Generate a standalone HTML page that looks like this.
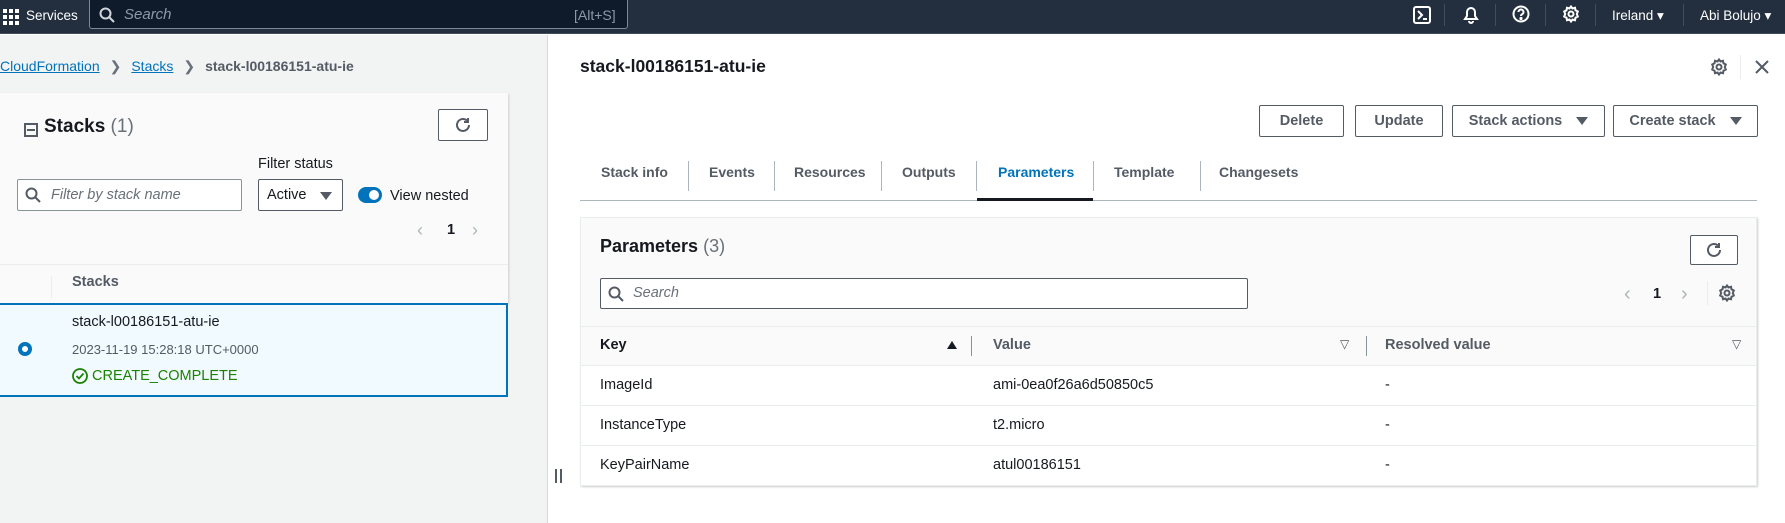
<!DOCTYPE html>
<html><head><meta charset="utf-8"><style>
*{box-sizing:border-box;margin:0;padding:0}
body{width:1785px;height:523px;overflow:hidden;font-family:"Liberation Sans",sans-serif;background:#fff;position:relative;color:#16191f;font-size:14.5px}
.a{position:absolute;white-space:nowrap}
.top{left:0;top:0;width:1785px;height:34px;background:#232f3e;border-bottom:1px solid #414d5c}
.btn{position:absolute;border:1px solid #545b64;border-radius:2px;background:#fff;color:#545b64;font-weight:bold;font-size:14.5px;display:flex;align-items:center;justify-content:center;gap:14px}
.tri{width:0;height:0;border-left:6px solid transparent;border-right:6px solid transparent;border-top:8px solid #545b64;display:inline-block}
.tab{position:absolute;top:164px;color:#545b64;font-weight:bold;font-size:14px}
.sep{position:absolute;width:1px;background:#aab7b8}
.hl{position:absolute;height:1px;background:#eaeded}
</style></head><body>
<div class="a top"></div>
<svg class="a" style="left:3px;top:9px" width="16" height="16" viewBox="0 0 16 16" fill="#fff"><rect x="0" y="0" width="4" height="4"/><rect x="6" y="0" width="4" height="4"/><rect x="12" y="0" width="4" height="4"/><rect x="0" y="6" width="4" height="4"/><rect x="6" y="6" width="4" height="4"/><rect x="12" y="6" width="4" height="4"/><rect x="0" y="12" width="4" height="4"/><rect x="6" y="12" width="4" height="4"/><rect x="12" y="12" width="4" height="4"/></svg>
<div class="a" style="left:26px;top:8px;color:#fff;font-size:13.5px">Services</div>
<div class="a" style="left:89px;top:0;width:539px;height:29px;background:#0f1b2a;border:1px solid #7d8998;border-top:none;border-radius:0 0 3px 3px"></div>
<svg class="a" style="left:99px;top:7px" width="16" height="16" viewBox="0 0 16 16" fill="none" stroke="#d1d5db" stroke-width="2"><circle cx="6.5" cy="6.5" r="5"/><path d="M10 10l5 5"/></svg>
<div class="a" style="left:124px;top:6px;color:#8d99a8;font-style:italic;font-size:15px">Search</div>
<div class="a" style="left:574px;top:7px;color:#8d99a8;font-size:14px">[Alt+S]</div>
<svg class="a" style="left:1413px;top:6px" width="18" height="18" viewBox="0 0 18 18" fill="none" stroke="#fff" stroke-width="2"><rect x="1" y="1" width="16" height="16" rx="2"/><path d="M5 5l4 4-4 4M10 13h4"/></svg>
<div class="sep" style="left:1444px;top:4px;height:22px;background:#414d5c"></div>
<svg class="a" style="left:1462px;top:5px" width="18" height="20" viewBox="0 0 18 20" fill="none" stroke="#fff" stroke-width="2"><path d="M3 14h12l-2-3V7a4 4 0 0 0-8 0v4z"/><path d="M7 16a2 2 0 0 0 4 0"/></svg>
<div class="sep" style="left:1495px;top:4px;height:22px;background:#414d5c"></div>
<svg class="a" style="left:1512px;top:5px" width="18" height="18" viewBox="0 0 18 18" fill="none" stroke="#fff" stroke-width="2"><circle cx="9" cy="9" r="7.5"/><path d="M6.5 7a2.5 2.5 0 1 1 3.5 2.3c-.7.4-1 .9-1 1.7" /><circle cx="9" cy="13.5" r=".6" fill="#fff"/></svg>
<div class="sep" style="left:1545px;top:4px;height:22px;background:#414d5c"></div>
<svg class="a" style="left:1562px;top:5px" width="18" height="18" viewBox="0 0 18 18" fill="none" stroke="#fff" stroke-width="2"><circle cx="9" cy="9" r="2.5"/><path d="M9 1.5l1.5 2 2.5-.7.5 2.5 2.3 1.2-1 2.5 1 2.5-2.3 1.2-.5 2.5-2.5-.7L9 16.5l-1.5-2-2.5.7-.5-2.5-2.3-1.2 1-2.5-1-2.5L4.5 5.3 5 2.8l2.5.7z"/></svg>
<div class="sep" style="left:1595px;top:4px;height:22px;background:#414d5c"></div>
<div class="a" style="left:1612px;top:8px;color:#fff;font-size:13.5px">Ireland ▾</div>
<div class="sep" style="left:1683px;top:4px;height:22px;background:#414d5c"></div>
<div class="a" style="left:1700px;top:8px;color:#fff;font-size:13.5px">Abi Bolujo ▾</div>

<!-- left panel -->
<div class="a" style="left:0;top:35px;width:548px;height:488px;background:#f2f3f3"></div>
<div class="a" style="left:547px;top:35px;width:1px;height:488px;background:#d5dbdb"></div>
<div class="a" style="left:0;top:58px;font-size:14px"><span style="color:#0073bb;text-decoration:underline">CloudFormation</span><span style="color:#687078;margin:0 10px">&#x276F;</span><span style="color:#0073bb;text-decoration:underline">Stacks</span><span style="color:#687078;margin:0 10px">&#x276F;</span><span style="color:#545b64;font-weight:bold">stack-l00186151-atu-ie</span></div>
<div class="a" style="left:0;top:93px;width:508px;height:210px;background:#fafafa;box-shadow:1px 1px 2px rgba(0,0,0,.15)"></div>
<div class="a" style="left:24px;top:123px;width:14px;height:14px;border:2px solid #545b64"></div>
<div class="a" style="left:27px;top:129px;width:8px;height:2px;background:#545b64"></div>
<div class="a" style="left:44px;top:116px;font-size:19px;font-weight:bold">Stacks <span style="font-weight:normal;color:#687078">(1)</span></div>
<div class="btn" style="left:438px;top:109px;width:50px;height:32px"><svg width="18" height="18" viewBox="0 0 18 18" fill="none" stroke="#545b64" stroke-width="2"><path d="M15 9a6 6 0 1 1-2-4.5"/><path d="M14 2v4h-4"/></svg></div>
<div class="a" style="left:258px;top:156px">Filter status</div>
<div class="a" style="left:17px;top:179px;width:225px;height:32px;background:#fff;border:1px solid #879596;border-radius:2px"></div>
<svg class="a" style="left:25px;top:187px" width="16" height="16" viewBox="0 0 16 16" fill="none" stroke="#545b64" stroke-width="2"><circle cx="6.5" cy="6.5" r="5"/><path d="M10 10l5 5"/></svg>
<div class="a" style="left:51px;top:187px;color:#687078;font-style:italic">Filter by stack name</div>
<div class="a" style="left:258px;top:179px;width:85px;height:32px;background:#fff;border:1px solid #545b64;border-radius:2px"></div>
<div class="a" style="left:267px;top:187px">Active</div>
<div class="a tri" style="left:320px;top:192px"></div>
<div class="a" style="left:358px;top:187px;width:24px;height:16px;border-radius:8px;background:#0073bb"></div>
<div class="a" style="left:369px;top:190px;width:10px;height:10px;border-radius:5px;background:#fff"></div>
<div class="a" style="left:390px;top:188px">View nested</div>
<div class="a" style="left:417px;top:220px;color:#aab7b8;font-size:18px">&#x2039;</div>
<div class="a" style="left:447px;top:222px;font-weight:bold">1</div>
<div class="a" style="left:472px;top:220px;color:#aab7b8;font-size:18px">&#x203A;</div>
<div class="hl" style="left:0;top:264px;width:508px"></div>
<div class="sep" style="left:51px;top:276px;height:22px;background:#eaeded"></div>
<div class="a" style="left:72px;top:274px;font-weight:bold;color:#545b64">Stacks</div>
<div class="a" style="left:0;top:303px;width:508px;height:94px;background:#f1faff;border:2px solid #0073bb;border-left:none"></div>
<div class="a" style="left:18px;top:342px;width:14px;height:14px;border-radius:7px;border:4px solid #0073bb;background:#fff"></div>
<div class="a" style="left:72px;top:314px">stack-l00186151-atu-ie</div>
<div class="a" style="left:72px;top:342px;font-size:13px;color:#545b64">2023-11-19 15:28:18 UTC+0000</div>
<svg class="a" style="left:72px;top:368px" width="16" height="16" viewBox="0 0 16 16" fill="none" stroke="#1d8102" stroke-width="1.8"><circle cx="8" cy="8" r="7"/><path d="M4.5 8l2.5 2.5 4.5-5"/></svg>
<div class="a" style="left:92px;top:368px;color:#1d8102">CREATE_COMPLETE</div>
<div class="a" style="left:555px;top:469px;width:2px;height:14px;background:#545b64"></div>
<div class="a" style="left:560px;top:469px;width:2px;height:14px;background:#545b64"></div>

<!-- right panel -->
<div class="a" style="left:580px;top:56px;font-size:17.5px;font-weight:bold">stack-l00186151-atu-ie</div>
<svg class="a" style="left:1710px;top:58px" width="18" height="18" viewBox="0 0 18 18" fill="none" stroke="#545b64" stroke-width="2"><circle cx="9" cy="9" r="2.5"/><path d="M9 1.5l1.5 2 2.5-.7.5 2.5 2.3 1.2-1 2.5 1 2.5-2.3 1.2-.5 2.5-2.5-.7L9 16.5l-1.5-2-2.5.7-.5-2.5-2.3-1.2 1-2.5-1-2.5L4.5 5.3 5 2.8l2.5.7z"/></svg>
<div class="sep" style="left:1740px;top:55px;height:24px;background:#eaeded"></div>
<svg class="a" style="left:1754px;top:59px" width="16" height="16" viewBox="0 0 16 16" stroke="#545b64" stroke-width="2"><path d="M2 2l12 12M14 2L2 14"/></svg>
<div class="btn" style="left:1259px;top:105px;width:85px;height:32px">Delete</div>
<div class="btn" style="left:1355px;top:105px;width:88px;height:32px">Update</div>
<div class="btn" style="left:1452px;top:105px;width:153px;height:32px">Stack actions <span class="tri"></span></div>
<div class="btn" style="left:1613px;top:105px;width:145px;height:32px">Create stack <span class="tri"></span></div>
<div class="tab" style="left:601px">Stack info</div>
<div class="sep" style="left:688px;top:161px;height:30px"></div>
<div class="tab" style="left:709px">Events</div>
<div class="sep" style="left:774px;top:161px;height:30px"></div>
<div class="tab" style="left:794px">Resources</div>
<div class="sep" style="left:881px;top:161px;height:30px"></div>
<div class="tab" style="left:902px">Outputs</div>
<div class="sep" style="left:976px;top:161px;height:30px"></div>
<div class="tab" style="left:998px;color:#0073bb">Parameters</div>
<div class="sep" style="left:1093px;top:161px;height:30px"></div>
<div class="tab" style="left:1114px">Template</div>
<div class="sep" style="left:1200px;top:161px;height:30px"></div>
<div class="tab" style="left:1219px">Changesets</div>
<div class="a" style="left:580px;top:200px;width:1177px;height:1px;background:#aab7b8"></div>
<div class="a" style="left:977px;top:198px;width:116px;height:3px;background:#16191f"></div>

<div class="a" style="left:580px;top:217px;width:1177px;height:269px;background:#fff;border:1px solid #eaeded;box-shadow:1px 1px 2px rgba(0,0,0,.2)"></div>
<div class="a" style="left:581px;top:218px;width:1175px;height:109px;background:#fafafa"></div>
<div class="a" style="left:600px;top:236px;font-size:18px;font-weight:bold">Parameters <span style="font-weight:normal;color:#687078">(3)</span></div>
<div class="btn" style="left:1690px;top:235px;width:48px;height:30px"><svg width="18" height="18" viewBox="0 0 18 18" fill="none" stroke="#545b64" stroke-width="2"><path d="M15 9a6 6 0 1 1-2-4.5"/><path d="M14 2v4h-4"/></svg></div>
<div class="a" style="left:600px;top:278px;width:648px;height:31px;background:#fff;border:1px solid #545b64;border-radius:2px"></div>
<svg class="a" style="left:608px;top:286px" width="16" height="16" viewBox="0 0 16 16" fill="none" stroke="#545b64" stroke-width="2"><circle cx="6.5" cy="6.5" r="5"/><path d="M10 10l5 5"/></svg>
<div class="a" style="left:633px;top:285px;color:#687078;font-style:italic">Search</div>
<div class="a" style="left:1624px;top:283px;color:#aab7b8;font-size:20px">&#x2039;</div>
<div class="a" style="left:1653px;top:286px;font-weight:bold">1</div>
<div class="a" style="left:1681px;top:283px;color:#aab7b8;font-size:20px">&#x203A;</div>
<div class="sep" style="left:1707px;top:281px;height:24px;background:#eaeded"></div>
<svg class="a" style="left:1718px;top:284px" width="18" height="18" viewBox="0 0 18 18" fill="none" stroke="#545b64" stroke-width="2"><circle cx="9" cy="9" r="2.5"/><path d="M9 1.5l1.5 2 2.5-.7.5 2.5 2.3 1.2-1 2.5 1 2.5-2.3 1.2-.5 2.5-2.5-.7L9 16.5l-1.5-2-2.5.7-.5-2.5-2.3-1.2 1-2.5-1-2.5L4.5 5.3 5 2.8l2.5.7z"/></svg>
<div class="hl" style="left:581px;top:326px;width:1175px"></div>
<div class="a" style="left:581px;top:327px;width:1175px;height:38px;background:#fafafa"></div>
<div class="a" style="left:600px;top:337px;font-weight:bold">Key</div>
<div class="a" style="left:947px;top:341px;border-left:5px solid transparent;border-right:5px solid transparent;border-bottom:8px solid #16191f"></div>
<div class="sep" style="left:971px;top:336px;height:20px;background:#879596"></div>
<div class="a" style="left:993px;top:337px;font-weight:bold;color:#545b64">Value</div>
<div class="a" style="left:1340px;top:337px;font-size:12px;color:#545b64">&#x25BD;</div>
<div class="sep" style="left:1366px;top:336px;height:20px;background:#879596"></div>
<div class="a" style="left:1385px;top:337px;font-weight:bold;color:#545b64">Resolved value</div>
<div class="a" style="left:1732px;top:337px;font-size:12px;color:#545b64">&#x25BD;</div>
<div class="hl" style="left:581px;top:365px;width:1175px"></div>
<div class="a" style="left:600px;top:377px">ImageId</div><div class="a" style="left:993px;top:377px">ami-0ea0f26a6d50850c5</div><div class="a" style="left:1385px;top:377px">-</div>
<div class="hl" style="left:581px;top:405px;width:1175px"></div>
<div class="a" style="left:600px;top:417px">InstanceType</div><div class="a" style="left:993px;top:417px">t2.micro</div><div class="a" style="left:1385px;top:417px">-</div>
<div class="hl" style="left:581px;top:445px;width:1175px"></div>
<div class="a" style="left:600px;top:457px">KeyPairName</div><div class="a" style="left:993px;top:457px">atul00186151</div><div class="a" style="left:1385px;top:457px">-</div>
</body></html>
